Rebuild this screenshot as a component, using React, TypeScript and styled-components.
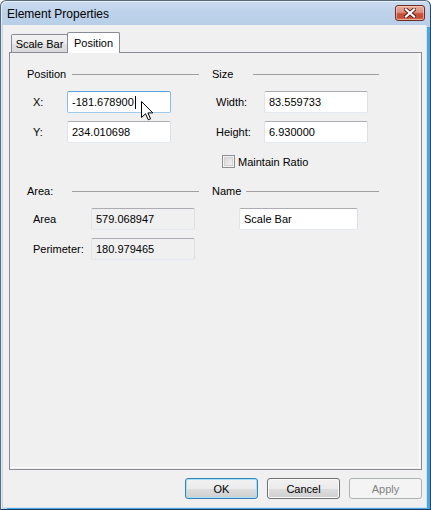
import React from "react";
import styled, { createGlobalStyle } from "styled-components";

const GlobalStyle = createGlobalStyle`
  html, body { margin: 0; padding: 0; background: #ffffff; }
  body {
    font-family: "Liberation Sans", Arial, sans-serif;
    font-size: 11px;
    color: #000;
  }
  * { box-sizing: border-box; }
`;

const Window = styled.div`
  position: relative;
  width: 431px;
  height: 510px;
  display: flex;
  flex-direction: column;
  border: 1px solid #56697f;
  border-right-color: #24476b;
  border-bottom-color: #1e3d5c;
  border-radius: 6px 6px 0 0;
  padding: 0 4px 2px 2px;
  background: linear-gradient(#cadbef 0px, #bdd2ea 12px, #b8cfe9 24px, #c2d6ec 25px, #c2d6ec 100%);
  box-shadow: inset 1px 1px 0 rgba(255, 255, 255, 0.55);
`;

const TitleBar = styled.div`
  height: 24px;
  display: flex;
  align-items: flex-start;
  justify-content: space-between;
  padding-left: 4px;
`;

const Title = styled.span`
  font-size: 12px;
  line-height: 12px;
  margin-top: 7px;
  color: #000;
`;

const CloseButton = styled.div`
  width: 30px;
  height: 16px;
  margin-top: 4px;
  margin-right: 1px;
  border: 1px solid #6f2a22;
  border-radius: 3px;
  background: linear-gradient(#e9ab9c 0%, #dc8e7f 45%, #c9533e 55%, #c14a33 80%, #d7775d 100%);
  box-shadow: inset 0 0 0 1px rgba(255, 220, 210, 0.55);
  display: flex;
  align-items: center;
  justify-content: center;
`;

const Client = styled.div`
  flex: 1;
  display: flex;
  flex-direction: column;
  background: #f0f0f0;
  padding: 0 4px 8px 6px;
  box-shadow: 1px 1px 0 0 #d3e3f4, 4px 2px 0 0 #4aa6e2;
`;

const TabStrip = styled.div`
  position: relative;
  z-index: 1;
  height: 28px;
  margin-bottom: -1px;
  display: flex;
  align-items: flex-end;
  padding-left: 2px;
`;

const Tab = styled.div<{ $active?: boolean; $width: number }>`
  width: ${(p) => p.$width}px;
  height: ${(p) => (p.$active ? 21 : 18)}px;
  margin-bottom: ${(p) => (p.$active ? 0 : 1)}px;
  margin-left: ${(p) => (p.$active ? -1 : 0)}px;
  padding-top: ${(p) => (p.$active ? 0 : 1)}px;
  border: 1px solid #898c95;
  border-bottom: none;
  border-radius: 2px 2px 0 0;
  background: ${(p) =>
    p.$active
      ? "#ffffff"
      : "linear-gradient(#f3f3f3 0%, #ececec 50%, #e2e2e2 51%, #d9d9d9 100%)"};
  display: flex;
  align-items: center;
  justify-content: center;
  white-space: nowrap;
`;

const Panel = styled.div`
  height: 418px;
  border: 1px solid #898c95;
  background: #f0f0f0;
  box-shadow: inset -1px -1px 0 #f0f0f0, inset -2px -2px 0 #ffffff;
  padding: 15px 0 0 17px;
`;

const Section = styled.div<{ $top?: number }>`
  display: grid;
  grid-template-columns: 172px 167px;
  column-gap: 13px;
  align-items: start;
  margin-top: ${(p) => p.$top ?? 0}px;
`;

const Column = styled.div`
  display: flex;
  flex-direction: column;
`;

const Heading = styled.div<{ $offset: number }>`
  display: grid;
  grid-template-columns: ${(p) => p.$offset}px 1fr;
  align-items: center;
  height: 13px;
  line-height: 13px;
  margin-bottom: 10px;
  white-space: nowrap;
`;

const HeadingLine = styled.div`
  height: 1px;
  background: #a0a0a0;
`;

const FieldRow = styled.div<{ $indent: number; $labelWidth: number }>`
  display: grid;
  grid-template-columns: ${(p) => p.$labelWidth}px auto;
  align-items: center;
  height: 22px;
  padding-left: ${(p) => p.$indent}px;
  white-space: nowrap;

  & + & {
    margin-top: 8px;
  }
`;

const TextBox = styled.div<{ $width: number; $focused?: boolean; $readOnly?: boolean }>`
  width: ${(p) => p.$width}px;
  height: 22px;
  padding: 0 4px;
  display: flex;
  align-items: center;
  border: 1px solid;
  border-color: ${(p) =>
    p.$focused ? "#5c9fdc #86bde9 #9ccbee #86bde9" : "#abadb3 #dbdfe6 #e3e9ef #e2e3ea"};
  border-radius: 2px;
  background: ${(p) => (p.$readOnly ? "#f0f0f0" : "#ffffff")};
  white-space: nowrap;
`;

const Caret = styled.span`
  display: inline-block;
  width: 1px;
  height: 13px;
  margin-left: 1px;
  background: #000;
`;

const CheckRow = styled.div`
  display: flex;
  align-items: center;
  gap: 3px;
  height: 13px;
  margin-top: 12px;
  padding-left: 10px;
  white-space: nowrap;
`;

const CheckBox = styled.span`
  width: 13px;
  height: 13px;
  border: 1px solid #8e8f8f;
  background: linear-gradient(135deg, #cfcfcf 0%, #e6e6e6 55%, #f7f7f7 100%);
  box-shadow: inset 0 0 0 1px #f2f2f2, inset 0 0 0 2px #d2d2d2;
`;

const Footer = styled.div`
  display: flex;
  justify-content: flex-end;
  gap: 9px;
  padding-top: 8px;
`;

const Button = styled.div<{ $default?: boolean; $disabled?: boolean }>`
  width: 73px;
  height: 21px;
  display: flex;
  align-items: center;
  justify-content: center;
  border: 1px solid ${(p) => (p.$disabled ? "#adb2b5" : p.$default ? "#3c7fb1" : "#707070")};
  border-radius: 3px;
  color: ${(p) => (p.$disabled ? "#838383" : "#000")};
  background: ${(p) =>
    p.$disabled
      ? "#f4f4f4"
      : "linear-gradient(#f2f2f2 0%, #ebebeb 50%, #dddddd 51%, #cfcfcf 100%)"};
  box-shadow: ${(p) =>
    p.$disabled
      ? "none"
      : p.$default
      ? "inset 0 0 0 1px #9fe3fb"
      : "inset 0 0 0 1px #fcfcfc"};
`;

const Pointer = styled.svg`
  position: absolute;
  left: 140px;
  top: 100px;
  pointer-events: none;
`;

function Field({
  label,
  value,
  indent,
  labelWidth,
  width,
  focused,
  readOnly,
}: {
  label: string;
  value: string;
  indent: number;
  labelWidth: number;
  width: number;
  focused?: boolean;
  readOnly?: boolean;
}) {
  return (
    <FieldRow $indent={indent} $labelWidth={labelWidth}>
      <span>{label}</span>
      <TextBox $width={width} $focused={focused} $readOnly={readOnly}>
        {value}
        {focused && <Caret />}
      </TextBox>
    </FieldRow>
  );
}

export default function App() {
  return (
    <>
      <GlobalStyle />
      <Window>
        <TitleBar>
          <Title>Element Properties</Title>
          <CloseButton>
            <svg width="12" height="10" viewBox="0 0 12 10">
              <path d="M2 1.5 L10 8.5 M10 1.5 L2 8.5" stroke="#5a1d16" strokeWidth="4" strokeLinecap="square" />
              <path d="M2 1.5 L10 8.5 M10 1.5 L2 8.5" stroke="#ffffff" strokeWidth="2.2" strokeLinecap="square" />
            </svg>
          </CloseButton>
        </TitleBar>
        <Client>
          <TabStrip>
            <Tab $width={57}>Scale Bar</Tab>
            <Tab $width={53} $active>
              Position
            </Tab>
          </TabStrip>
          <Panel>
            <Section>
              <Column>
                <Heading $offset={45}>
                  <span>Position</span>
                  <HeadingLine />
                </Heading>
                <Field label="X:" value="-181.678900" indent={6} labelWidth={34} width={104} focused />
                <Field label="Y:" value="234.010698" indent={6} labelWidth={34} width={104} />
              </Column>
              <Column>
                <Heading $offset={41}>
                  <span>Size</span>
                  <HeadingLine />
                </Heading>
                <Field label="Width:" value="83.559733" indent={4} labelWidth={48} width={104} />
                <Field label="Height:" value="6.930000" indent={4} labelWidth={48} width={104} />
                <CheckRow>
                  <CheckBox />
                  <span>Maintain Ratio</span>
                </CheckRow>
              </Column>
            </Section>
            <Section $top={17}>
              <Column>
                <Heading $offset={45}>
                  <span>Area:</span>
                  <HeadingLine />
                </Heading>
                <Field label="Area" value="579.068947" indent={6} labelWidth={58} width={104} readOnly />
                <Field label="Perimeter:" value="180.979465" indent={6} labelWidth={58} width={104} readOnly />
              </Column>
              <Column>
                <Heading $offset={34}>
                  <span>Name</span>
                  <HeadingLine />
                </Heading>
                <Field label="" value="Scale Bar" indent={27} labelWidth={0} width={119} />
              </Column>
            </Section>
          </Panel>
          <Footer>
            <Button $default>OK</Button>
            <Button>Cancel</Button>
            <Button $disabled>Apply</Button>
          </Footer>
        </Client>
        <Pointer width="13" height="20" viewBox="0 0 13 20">
          <path
            d="M0.5 0.5 L0.5 16.5 L4.5 12.8 L7.3 18.8 L9.6 17.8 L6.9 11.9 L11.8 11.9 Z"
            fill="#ffffff"
            stroke="#000000"
            strokeWidth="1"
            strokeLinejoin="miter"
          />
        </Pointer>
      </Window>
    </>
  );
}
